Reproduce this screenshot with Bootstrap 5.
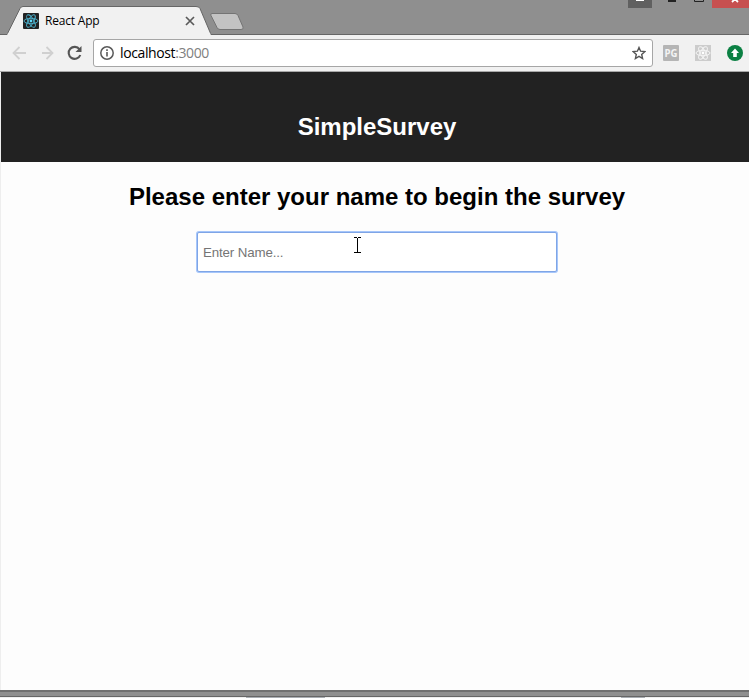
<!DOCTYPE html>
<html lang="en">
<head>
<meta charset="utf-8">
<title>React App</title>
<meta name="viewport" content="width=device-width, initial-scale=1">
<link href="https://cdn.jsdelivr.net/npm/bootstrap@5.3.0/dist/css/bootstrap.min.css" rel="stylesheet">
<style>
body{height:698px;background:#fdfdfd;font-family:"Liberation Sans",Arial,sans-serif;color:#000}
svg{display:block;flex:none}
.tab-strip{height:35px;background:#8f8f8f;border-bottom:1px solid #666}
.tab-shape,.window-buttons{position:absolute;top:0}
.tab-shape{left:0}.window-buttons{right:0}
.tab-label{position:relative;padding:7px 0 0 23px;height:35px;font:12px/28px "Open Sans","Noto Sans",sans-serif;color:#000}
.tab-title{width:139px;margin-left:6px;letter-spacing:-.2px}
.toolbar-row{height:37px;background:#f1f1f1;border-bottom:1px solid #a8a8a8;padding:0 6px 0 12px}
.address-box{width:560px;height:28px;border:1px solid #a6a6a6;border-radius:3px;margin-left:10px;padding:0 6px;background:#fff}
.address-text{font:14px/26px "Open Sans","Noto Sans",sans-serif;margin-left:6px;letter-spacing:-.39px;color:#000}
.address-text span{color:#808080}
.viewport-area{height:618px;border-left:1px solid #eee}
.survey-page{width:752px;flex:none}
.survey-header{height:90px;background:#222;padding-top:41px;color:#fff}
.survey-heading{font-size:24px;line-height:28px;font-weight:700;margin:0}
.survey-prompt{margin-top:21px}
.name-field{width:360px;height:40px;margin:21px auto 0;padding:1px 5px 0;border:1px solid #7fa5e6;border-radius:2px;box-shadow:0 0 0 1px #a6c6fa;font-size:13.33px;letter-spacing:-.14px;background:#fff}
.name-field:focus{border-color:#7fa5e6;box-shadow:0 0 0 1px #a6c6fa}
.name-field::placeholder{color:#757575;opacity:1}
.text-cursor{position:absolute;left:353px;top:237px}
.window-edge{height:8px;background:#8f8f8f;border-top:2px solid #707070}
</style>
</head>
<body class="overflow-hidden position-relative">
<header class="tab-strip position-relative">
  <svg class="tab-shape" width="250" height="35" viewBox="0 0 250 35">
    <path d="M0 34.500H7L20 8.500Q21 6.500 23 6.500H196Q199 6.500 200 8.500L211 34.500H250" fill="#f1f1f1" stroke="#666"/>
    <path d="M7.500 34.500H210.500" stroke="#f1f1f1" stroke-width="2"/>
    <path d="M212 13.500H235Q237 13.500 238 15.500L243 27Q244 29.500 241 29.500H220Q218 29.500 217 27.500L211 15.500Q210 13.500 212 13.500Z" fill="#c3c3c3" stroke="#747474"/>
  </svg>
  <div class="tab-label d-flex align-items-center">
    <svg width="16" height="16" viewBox="0 0 16 16"><rect width="16" height="16" rx="1" fill="#222"/><g fill="none" stroke="#4cb4d0" stroke-width=".9"><ellipse cx="8" cy="8" rx="7" ry="2.700"/><ellipse cx="8" cy="8" rx="7" ry="2.700" transform="rotate(60 8 8)"/><ellipse cx="8" cy="8" rx="7" ry="2.700" transform="rotate(120 8 8)"/></g><circle cx="8" cy="8" r="1.400" fill="#61dafb"/></svg>
    <span class="tab-title">React App</span>
    <svg width="11" height="10" viewBox="0 0 11 10"><path d="M2 1L10 9M10 1L2 9" stroke="#5a5a5a" stroke-width="1.700"/></svg>
  </div>
  <svg class="window-buttons" width="121" height="8" viewBox="0 0 121 8"><path fill="#606060" d="M0 0H24V8H0z"/><path fill="#fff" d="M8 0H16V1H8z"/><path fill="#222" d="M40 0H48V2H40z"/><path d="M66.500 0V1.500H75.500V0" fill="none" stroke="#222"/><path fill="#c75050" d="M84 0H121V8H84z"/><path d="M104 2L107 -1L110 2" fill="none" stroke="#fff" stroke-width="1.800"/></svg>
</header>
<nav class="toolbar-row d-flex align-items-center">
  <svg width="14" height="14" viewBox="0 0 14 14" fill="none" stroke="#d0d0d0" stroke-width="1.800"><path d="M14 7H1.500M7.500 1L1.500 7L7.500 13"/></svg>
  <svg class="ms-3" width="14" height="14" viewBox="0 0 14 14" fill="none" stroke="#d0d0d0" stroke-width="1.800"><path d="M-2 7H12.500M6.500 1L12.500 7L6.500 13" transform="translate(-2 0)"/></svg>
  <svg class="ms-2" width="19" height="16" viewBox="0 0 19 16"><path d="M15.500 4.300A6 6 0 1 0 16.300 10" fill="none" stroke="#555" stroke-width="2.100"/><path d="M17.500 1V7H11.500z" fill="#555"/></svg>
  <div class="address-box d-flex align-items-center">
    <svg width="14" height="14" viewBox="0 0 14 14"><circle cx="7" cy="7" r="6.200" fill="none" stroke="#595959" stroke-width="1.500"/><path d="M6.200 6H7.800V10.500H6.200zM6.200 3.300H7.800V5H6.200z" fill="#595959"/></svg>
    <div class="address-text">localhost<span>:3000</span></div>
    <svg class="ms-auto" width="14" height="14" viewBox="0 0 14 14"><path d="M7 1.500L8.600 5.200L12.800 5.600L9.700 8.400L10.600 12.500L7 10.400L3.400 12.500L4.300 8.400L1.200 5.600L5.400 5.200Z" fill="none" stroke="#555" stroke-width="1.400"/></svg>
  </div>
  <svg class="ms-auto" width="16" height="16" viewBox="0 0 16 16"><rect width="16" height="16" rx="1" fill="#b5b5b5"/><text x="8" y="12" text-anchor="middle" textLength="13" lengthAdjust="spacingAndGlyphs" font-family="Open Sans,sans-serif" font-weight="700" font-size="10.500" fill="#f4f4f4">PG</text></svg>
  <svg class="ms-3" width="16" height="16" viewBox="0 0 16 16"><rect width="16" height="16" fill="#ccc"/><g fill="none" stroke="#f4f4f4" stroke-width="1"><ellipse cx="8" cy="8" rx="7" ry="2.700"/><ellipse cx="8" cy="8" rx="7" ry="2.700" transform="rotate(60 8 8)"/><ellipse cx="8" cy="8" rx="7" ry="2.700" transform="rotate(120 8 8)"/></g><circle cx="8" cy="8" r="1.400" fill="#fff"/></svg>
  <svg class="ms-3" width="16" height="16" viewBox="0 0 16 16"><circle cx="8" cy="8" r="8" fill="#0b8043"/><path d="M8 3.500L12 8H9.800V12H6.200V8H4z" fill="#fff"/></svg>
</nav>
<main class="viewport-area d-flex overflow-hidden">
  <div class="survey-page text-center">
    <div class="survey-header"><h2 class="survey-heading">SimpleSurvey</h2></div>
    <h2 class="survey-heading survey-prompt">Please enter your name to begin the survey</h2>
    <input class="form-control name-field" type="text" placeholder="Enter Name..." aria-label="Name">
  </div>
</main>
<svg class="text-cursor" width="9" height="17" viewBox="0 0 9 17"><path d="M1 .5H4M5 .5H8M4.500 1V16M1 15.500H4M5 15.500H8" stroke="#000" fill="none"/></svg>
<footer class="window-edge"><svg width="749" height="6" viewBox="0 0 749 6"><path fill="#666" d="M0 4H749V5H0z"/><path fill="#eee" d="M0 5H749V6H0z"/><path fill="#a9adb2" d="M246 5H325V6H246zM621 5H645V6H621z"/></svg></footer>
<script src="https://cdn.jsdelivr.net/npm/bootstrap@5.3.0/dist/js/bootstrap.bundle.min.js"></script>
</body>
</html>
